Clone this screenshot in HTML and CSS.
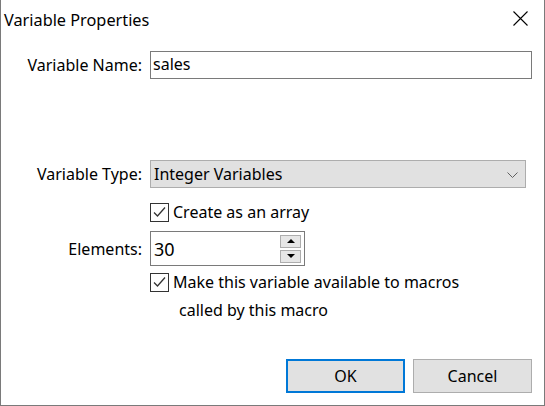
FILE: index.html
```html
<!DOCTYPE html>
<html>
<head>
<meta charset="utf-8">
<link rel="stylesheet" href="styles.css">
</head>
<body>
<div class="dialog">
  <div class="titlebar">
    <span class="title">Variable Properties</span>
    <svg class="close" width="15" height="15" viewBox="0 0 15 15"><path d="M0.5 0.5L14.5 14.5M14.5 0.5L0.5 14.5" stroke="#000" stroke-width="1.1" fill="none"/></svg>
  </div>
  <div class="row row-name">
    <span class="lbl">Variable Name:</span>
    <div class="textbox">sales</div>
  </div>
  <div class="row row-type">
    <span class="lbl">Variable Type:</span>
    <div class="select">
      <span>Integer Variables</span>
      <svg class="chev" width="11" height="6" viewBox="0 0 11 6"><path d="M0.5 0.5L5.5 5.5L10.5 0.5" stroke="#606060" stroke-width="1" fill="none"/></svg>
    </div>
  </div>
  <div class="row row-array">
    <span class="lbl"></span>
    <div class="check">
      <span class="box"><svg width="17" height="17" viewBox="0 0 17 17"><path d="M3 8.5L6.5 12L14 3.5" stroke="#333" stroke-width="1.3" fill="none"/></svg></span>
      <span class="ctext">Create as an array</span>
    </div>
  </div>
  <div class="row row-elements">
    <span class="lbl">Elements:</span>
    <div class="spin">
      <span class="val">30</span>
      <div class="spinbtns">
        <span class="sb"><svg width="8" height="4" viewBox="0 0 8 4"><path d="M0 4L4 0L8 4Z" fill="#000"/></svg></span>
        <span class="sb"><svg width="8" height="4" viewBox="0 0 8 4"><path d="M0 0L4 4L8 0Z" fill="#000"/></svg></span>
      </div>
    </div>
  </div>
  <div class="row row-macro">
    <span class="lbl"></span>
    <div class="check">
      <span class="box"><svg width="17" height="17" viewBox="0 0 17 17"><path d="M3 8.5L6.5 12L14 3.5" stroke="#333" stroke-width="1.3" fill="none"/></svg></span>
      <span class="ctext">Make this variable available to macros</span>
    </div>
  </div>
  <div class="row row-macro2">
    <span class="lbl"></span>
    <span class="ctext2">called by this macro</span>
  </div>
  <div class="buttons">
    <button class="btn btn-default">OK</button>
    <button class="btn">Cancel</button>
  </div>
</div>
</body>
</html>
```
FILE: styles.css
```css
html, body {
  margin: 0;
  padding: 0;
  background: #ffffff;
}
body {
  font-family: "Noto Sans", "Open Sans", sans-serif;
  font-size: 16px;
  color: #000;
}
.dialog {
  width: 545px;
  height: 406px;
  box-sizing: border-box;
  border: 1px solid #7a7a7a;
  border-top: none;
  background: #fff;
  display: flex;
  flex-direction: column;
}
.titlebar {
  height: 40px;
  display: flex;
  justify-content: space-between;
  align-items: flex-start;
}
.title {
  padding-left: 3px;
  padding-top: 10px;
  line-height: 20px;
  font-size: 16.3px;
}
.close {
  margin-top: 11px;
  margin-right: 16px;
}
.row {
  display: flex;
  align-items: center;
}
.lbl {
  width: 141px;
  margin-right: 8px;
  text-align: right;
  flex: none;
  white-space: nowrap;
}
.row-name {
  margin-top: 11px;
  height: 28px;
}
.textbox {
  width: 382px;
  height: 28px;
  box-sizing: border-box;
  border: 1px solid #7a7a7a;
  padding-left: 2px;
  line-height: 25px;
}
.row-type {
  margin-top: 81px;
  height: 28px;
}
.select {
  width: 376px;
  height: 28px;
  box-sizing: border-box;
  border: 1px solid #adadad;
  background: #e1e1e1;
  display: flex;
  align-items: center;
  justify-content: space-between;
  padding-left: 3px;
  padding-right: 7px;
}
.chev {
  margin-top: 1px;
}
.row-array {
  margin-top: 15px;
  height: 19px;
}
.check {
  display: flex;
  align-items: center;
  height: 19px;
}
.box {
  width: 19px;
  height: 19px;
  box-sizing: border-box;
  border: 1px solid #333;
  background: #fff;
  display: flex;
  align-items: center;
  justify-content: center;
  flex: none;
}
.ctext {
  margin-left: 4px;
  line-height: 19px;
  white-space: nowrap;
}
.row-elements {
  margin-top: 9px;
  height: 35px;
}
.spin {
  width: 155px;
  height: 35px;
  box-sizing: border-box;
  border: 1px solid #7a7a7a;
  display: flex;
  align-items: center;
  justify-content: space-between;
  padding-left: 3px;
  padding-right: 3px;
}
.val {
  font-size: 18px;
}
.spinbtns {
  display: flex;
  flex-direction: column;
  gap: 2px;
}
.sb {
  width: 21px;
  height: 13px;
  box-sizing: border-box;
  border: 1px solid #adadad;
  background: #e6e6e6;
  display: flex;
  align-items: center;
  justify-content: center;
}
.row-macro {
  margin-top: 7px;
  height: 19px;
}
.row-macro2 {
  margin-top: 7px;
  height: 22px;
}
.ctext2 {
  padding-left: 29px;
  line-height: 22px;
  white-space: nowrap;
}
.buttons {
  margin-top: auto;
  margin-bottom: 12px;
  display: flex;
  justify-content: flex-end;
  gap: 8px;
  padding-right: 12px;
}
.btn {
  width: 119px;
  height: 34px;
  box-sizing: border-box;
  border: 1px solid #adadad;
  background: #e1e1e1;
  font-family: "Noto Sans", "Open Sans", sans-serif;
  font-size: 16px;
  color: #000;
  padding: 0;
}
.btn-default {
  border: 2px solid #0078d7;
}
```
